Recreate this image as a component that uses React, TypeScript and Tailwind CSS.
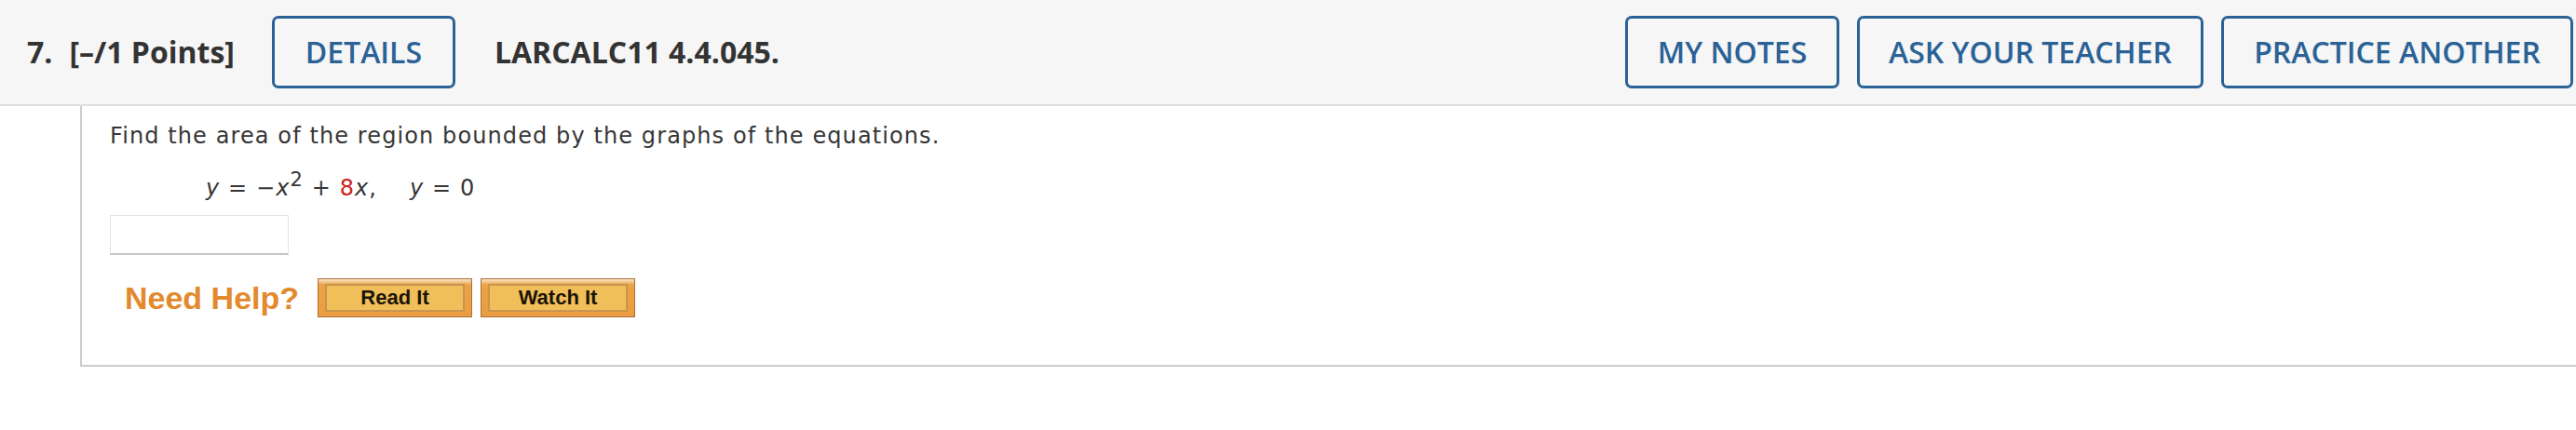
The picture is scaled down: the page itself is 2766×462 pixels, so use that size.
import React from 'react';

const headerBtn =
  "h-[78px] shrink-0 border-[3px] border-[#2b6296] rounded-[7px] flex items-center justify-center text-[32px] font-semibold text-[#2b6296] bg-[#f6f6f6] font-['Open_Sans',sans-serif]";

function HelpButton({ label }: { label: string }) {
  return (
    <div className="w-[166px] h-[42px] border border-[#a87038] bg-[linear-gradient(to_bottom,#fae6cb_0px,#eda247_6px,#eb9c41_100%)] px-[7px] py-[5px]">
      <div className="h-full border-2 border-[#c8954e] bg-[#f1bf5a] flex items-center justify-center font-bold text-[22px] text-[#1a1408] font-['Liberation_Sans',Arial,sans-serif]">
        {label}
      </div>
    </div>
  );
}

export default function App() {
  return (
    <div className="w-[2766px] h-[462px] bg-white overflow-hidden">
      {/* question header */}
      <header className="h-[114px] bg-[#f6f6f6] border-b-2 border-[#dfdfdf] flex items-center pl-[29px] pr-[3px] font-['Open_Sans',sans-serif] text-[#333]">
        <span className="text-[32px] font-bold">7.</span>
        <span className="text-[32px] font-bold ml-[18px]">[–/1 Points]</span>
        <div className={`${headerBtn} w-[197px] ml-[40px]`}>DETAILS</div>
        <span className="text-[32px] font-bold ml-[42px]">LARCALC11 4.4.045.</span>
        <div className="ml-auto flex gap-[19px]">
          <div className={`${headerBtn} w-[230px]`}>MY NOTES</div>
          <div className={`${headerBtn} w-[372px]`}>ASK YOUR TEACHER</div>
          <div className={`${headerBtn} w-[378px]`}>PRACTICE ANOTHER</div>
        </div>
      </header>

      {/* question body */}
      <div className="ml-[86px] h-[280px] border-l-2 border-b-2 border-[#cccccc] pl-[30px] pt-[18px] font-['DejaVu_Sans',Verdana,sans-serif] text-[24px] leading-[28px] tracking-[1.1px] text-[#363636]">
        <p>Find the area of the region bounded by the graphs of the equations.</p>
        <div className="mt-[28px] pl-[103px] whitespace-pre">
          <i>y</i> = −<i>x</i>
          <sup className="text-[21px]">2</sup> + <span className="text-[#cc2222]">8</span>
          <i>x</i>,    <i>y</i> = 0
        </div>
        <div className="mt-[15px] w-[192px] h-[43px] border border-[#e2e2e2] border-b-2 border-b-[#c4c4c4] bg-white" />
        <div className="mt-[25px] flex items-center tracking-normal">
          <span className="ml-[16px] mr-[20px] text-[34px] leading-none font-bold text-[#e28a2d] font-['Liberation_Sans',Arial,sans-serif]">
            Need Help?
          </span>
          <div className="flex gap-[9px]">
            <HelpButton label="Read It" />
            <HelpButton label="Watch It" />
          </div>
        </div>
      </div>
    </div>
  );
}
